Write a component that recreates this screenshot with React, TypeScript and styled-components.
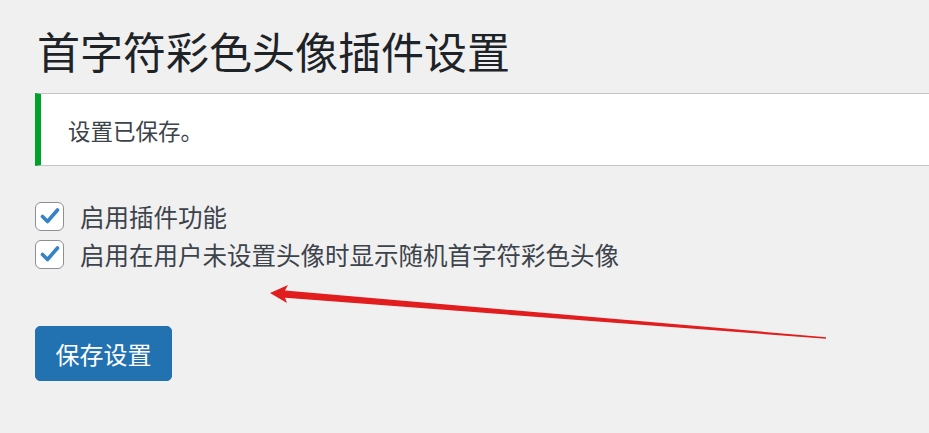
import React from "react";
import styled, { createGlobalStyle } from "styled-components";

const GlobalStyle = createGlobalStyle`
  html, body {
    margin: 0;
    padding: 0;
    background: #f0f0f1;
    overflow: hidden;
  }
  body {
    font-family: "Noto Sans CJK SC", "Noto Sans", sans-serif;
    color: #1d2327;
  }
`;

const Page = styled.div`
  position: relative;
  width: 929px;
  height: 433px;
  padding: 22px 0 0 35px;
  box-sizing: border-box;
`;

const Title = styled.h1`
  margin: 0 0 15px 2px;
  font-size: 43px;
  font-weight: 400;
  line-height: 56px;
  color: #1d2327;
`;

const Notice = styled.div`
  display: flex;
  align-items: center;
  height: 71px;
  margin-right: -20px;
  padding-left: 27px;
  background: #fff;
  border-top: 1px solid #c3c4c7;
  border-bottom: 1px solid #c3c4c7;
  border-left: 6px solid #00a32a;
  font-size: 22.5px;
  color: #3c434a;
`;

const Options = styled.div`
  display: flex;
  flex-direction: column;
  gap: 8px;
  margin-top: 35px;
`;

const OptionRow = styled.label`
  display: flex;
  align-items: center;
  gap: 16px;
  height: 30px;
  font-size: 24.5px;
  color: #3c434a;
`;

const Box = styled.span`
  display: flex;
  align-items: center;
  justify-content: center;
  width: 29px;
  height: 29px;
  background: #fff;
  border: 1px solid #8c8f94;
  border-radius: 6px;
  box-sizing: border-box;
`;

const SaveButton = styled.button`
  margin-top: 57px;
  width: 137px;
  height: 55px;
  background: #2271b1;
  border: 1px solid #2271b1;
  border-radius: 5px;
  color: #fff;
  font-family: inherit;
  font-size: 24px;
  cursor: pointer;
`;

const Overlay = styled.svg`
  position: absolute;
  left: 0;
  top: 0;
  pointer-events: none;
`;

function Check() {
  return (
    <svg width="20" height="18" viewBox="0 0 20 18">
      <path
        d="M2.5 9.5 L7.5 14.5 L17.5 3"
        fill="none"
        stroke="#3582c4"
        strokeWidth="3.6"
        strokeLinecap="round"
        strokeLinejoin="round"
      />
    </svg>
  );
}

function Option({ text }: { text: string }) {
  return (
    <OptionRow>
      <Box>
        <Check />
      </Box>
      {text}
    </OptionRow>
  );
}

function App() {
  return (
    <>
      <GlobalStyle />
      <Page>
        <Title>首字符彩色头像插件设置</Title>
        <Notice>设置已保存。</Notice>
        <Options>
          <Option text="启用插件功能" />
          <Option text="启用在用户未设置头像时显示随机首字符彩色头像" />
        </Options>
        <SaveButton>保存设置</SaveButton>
        <Overlay width="929" height="433" viewBox="0 0 929 433">
          <polygon
            points="270,293 288,285 285,290.6 826,337.2 826,338.8 285,297.8 287,303"
            fill="#e11d1d"
          />
        </Overlay>
      </Page>
    </>
  );
}

export default App;
